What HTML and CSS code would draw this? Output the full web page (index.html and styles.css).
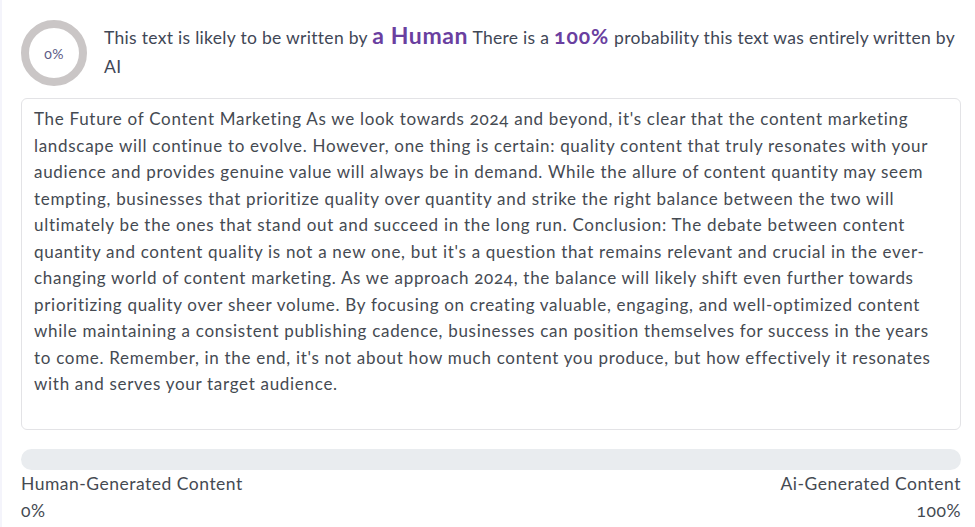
FILE: index.html
```html
<!DOCTYPE html>
<html lang="en">
<head>
<meta charset="utf-8">
<title>AI Content Detector Result</title>
<link rel="stylesheet" href="styles.css">
</head>
<body>
<div class="page">
  <div class="result">
    <div class="gauge"><span class="gauge-label">0%</span></div>
    <p class="verdict">This text is likely to be written by <strong class="big">a Human</strong> There is a <strong class="pct">100%</strong> probability this text was entirely written by AI</p>
  </div>
  <div class="content">The Future of Content Marketing As we look towards 2024 and beyond, it's clear that the content marketing landscape will continue to evolve. However, one thing is certain: quality content that truly resonates with your audience and provides genuine value will always be in demand. While the allure of content quantity may seem tempting, businesses that prioritize quality over quantity and strike the right balance between the two will ultimately be the ones that stand out and succeed in the long run. Conclusion: The debate between content quantity and content quality is not a new one, but it's a question that remains relevant and crucial in the ever-changing world of content marketing. As we approach 2024, the balance will likely shift even further towards prioritizing quality over sheer volume. By focusing on creating valuable, engaging, and well-optimized content while maintaining a consistent publishing cadence, businesses can position themselves for success in the years to come. Remember, in the end, it's not about how much content you produce, but how effectively it resonates with and serves your target audience.</div>
  <div class="progress"></div>
  <div class="legend">
    <div class="legend-col">
      <div class="legend-title">Human-Generated Content</div>
      <div class="legend-value">0%</div>
    </div>
    <div class="legend-col right">
      <div class="legend-title">Ai-Generated Content</div>
      <div class="legend-value">100%</div>
    </div>
  </div>
</div>
</body>
</html>
```
FILE: styles.css
```css
html, body {
  margin: 0;
  padding: 0;
  background: #ffffff;
}
body {
  font-family: "Lato", "Open Sans", sans-serif;
  font-feature-settings: "onum" 1;
  color: #434a54;
}
.page {
  border-left: 2px solid #f4f4fb;
  padding: 20px 14px 0 19px;
  min-height: 527px;
  box-sizing: border-box;
}
.result {
  display: flex;
  align-items: flex-start;
  gap: 17px;
  margin-right: -12px;
}
.gauge {
  flex: none;
  width: 66px;
  height: 66px;
  box-sizing: border-box;
  border: 8px solid #cac6c6;
  border-radius: 50%;
  display: flex;
  align-items: center;
  justify-content: center;
}
.gauge-label {
  font-size: 14px;
  letter-spacing: 0.3px;
  color: #5b5a86;
}
.verdict {
  margin: 3px 0 0;
  font-size: 17.5px;
  letter-spacing: 0.3px;
  line-height: 29px;
  color: #3f4756;
}
.verdict .big {
  font-size: 23px;
  line-height: 1;
  letter-spacing: 0.6px;
  color: #6a3fa0;
  font-weight: 700;
}
.verdict .pct {
  font-size: 21px;
  line-height: 1;
  letter-spacing: 1px;
  color: #6a3fa0;
  font-weight: 700;
}
.content {
  margin-top: 12px;
  border: 1px solid #e3e3e6;
  border-radius: 6px;
  padding: 7px 12px 32px;
  font-size: 17px;
  letter-spacing: 0.7px;
  line-height: 26.5px;
  color: #454a52;
  height: 332px;
  box-sizing: border-box;
}
.progress {
  margin-top: 19px;
  height: 21px;
  border-radius: 11px;
  background: #e9ecef;
}
.legend {
  display: flex;
  justify-content: space-between;
  font-size: 17.5px;
  letter-spacing: 0.5px;
  line-height: 27px;
  color: #454a52;
}
.legend-col.right {
  text-align: right;
}
```
